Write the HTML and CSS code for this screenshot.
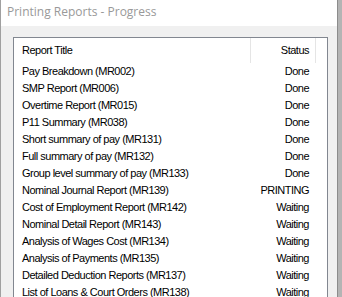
FILE: index.html
```html
<!DOCTYPE html>
<html lang="en">
<head>
    <meta charset="UTF-8">
    <title>Printing Reports - Progress</title>
    <link rel="stylesheet" href="styles.css">
</head>
<body>
    <div class="window">
        <div class="titlebar">Printing Reports - Progress</div>
        <div class="client">
            <div class="listview">
                <div class="lv-header">
                    <div class="col-title">Report Title</div>
                    <div class="col-status">Status</div>
                    <div class="col-rest"></div>
                </div>
                <div class="lv-row"><span class="cell-title">Pay Breakdown (MR002)</span><span class="cell-status">Done</span></div>
                <div class="lv-row"><span class="cell-title">SMP Report (MR006)</span><span class="cell-status">Done</span></div>
                <div class="lv-row"><span class="cell-title">Overtime Report (MR015)</span><span class="cell-status">Done</span></div>
                <div class="lv-row"><span class="cell-title">P11 Summary (MR038)</span><span class="cell-status">Done</span></div>
                <div class="lv-row"><span class="cell-title">Short summary of pay (MR131)</span><span class="cell-status">Done</span></div>
                <div class="lv-row"><span class="cell-title">Full summary of pay (MR132)</span><span class="cell-status">Done</span></div>
                <div class="lv-row"><span class="cell-title">Group level summary of pay (MR133)</span><span class="cell-status">Done</span></div>
                <div class="lv-row"><span class="cell-title">Nominal Journal Report (MR139)</span><span class="cell-status">PRINTING</span></div>
                <div class="lv-row"><span class="cell-title">Cost of Employment Report (MR142)</span><span class="cell-status">Waiting</span></div>
                <div class="lv-row"><span class="cell-title">Nominal Detail Report (MR143)</span><span class="cell-status">Waiting</span></div>
                <div class="lv-row"><span class="cell-title">Analysis of Wages Cost (MR134)</span><span class="cell-status">Waiting</span></div>
                <div class="lv-row"><span class="cell-title">Analysis of Payments (MR135)</span><span class="cell-status">Waiting</span></div>
                <div class="lv-row"><span class="cell-title">Detailed Deduction Reports (MR137)</span><span class="cell-status">Waiting</span></div>
                <div class="lv-row"><span class="cell-title">List of Loans &amp; Court Orders (MR138)</span><span class="cell-status">Waiting</span></div>
            </div>
        </div>
    </div>
</body>
</html>
```

FILE: styles.css
```css
html, body {
    margin: 0;
    padding: 0;
    height: 100%;
    overflow: hidden;
}
body {
    background-color: #b4b4b4;
    font-family: "Liberation Sans", Arial, sans-serif;
    font-size: 11px;
    letter-spacing: -0.5px;
    color: #000;
}
.window {
    width: 336px;
    height: 100%;
    border-left: 1px solid #a0a0a0;
    border-right: 1px solid #8c8c8c;
    background-color: #f0f0f0;
}
.titlebar {
    height: 26px;
    line-height: 24px;
    padding-left: 6px;
    background-color: #fff;
    color: #999;
    font-family: "Open Sans", "Liberation Sans", sans-serif;
    font-size: 12px;
    letter-spacing: 0;
}
.client {
    padding: 11px 9px 0 12px;
}
.listview {
    background-color: #fff;
    border: 1px solid #828790;
    border-bottom: none;
    height: 300px;
}
.lv-header {
    display: flex;
    height: 25px;
    align-items: stretch;
}
.col-title {
    width: 228px;
    padding-left: 8px;
    line-height: 25px;
    border-right: 1px solid #e5e5e5;
}
.col-status {
    width: 58px;
    padding-right: 6px;
    text-align: right;
    line-height: 25px;
    border-right: 1px solid #e5e5e5;
}
.col-rest {
    flex: 1;
}
.lv-row {
    display: flex;
    height: 17px;
    line-height: 17px;
    white-space: nowrap;
}
.cell-title {
    width: 229px;
    padding-left: 8px;
    overflow: hidden;
}
.cell-status {
    width: 58px;
    padding-right: 6px;
    text-align: right;
}
```
